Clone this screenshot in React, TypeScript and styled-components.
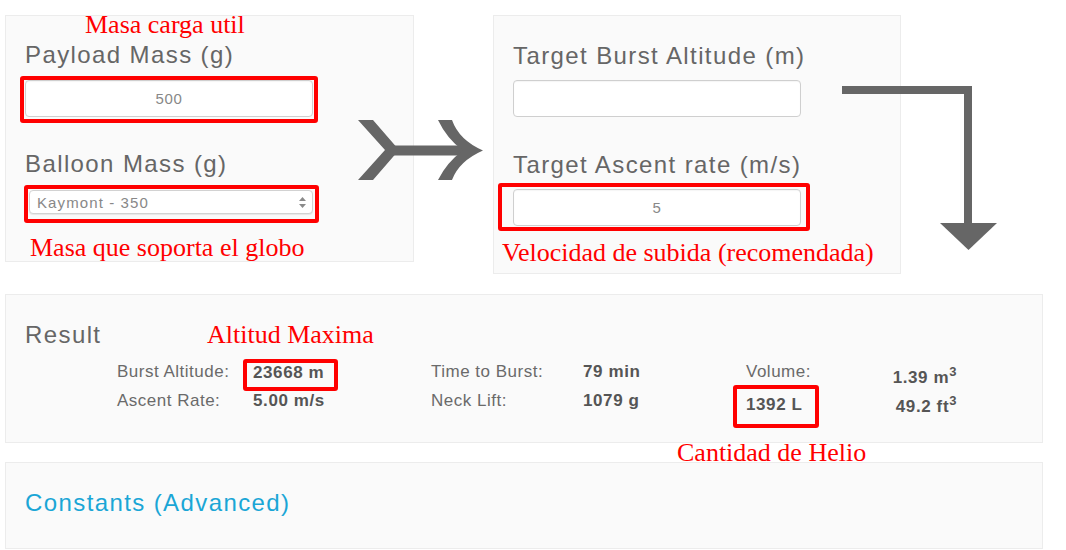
import React from "react";
import styled, { createGlobalStyle } from "styled-components";

const GlobalStyle = createGlobalStyle`
  body {
    margin: 0;
    background: #ffffff;
    font-family: "Liberation Sans", Arial, Helvetica, sans-serif;
  }
`;

export default function App() {
    return (
        <>
            <GlobalStyle />
            <Page>
                <TopRow>
                    <Panel $width={409} $height={247} $pad="0 19px">
                        <Note $ml={60} $mt={-2}>Masa carga util</Note>
                        <FieldLabel $mt={4}>Payload Mass (g)</FieldLabel>
                        <Highlight $mt={6} $ml={-5} $pad="0 1px 2px 1px">
                            <TextInput $width={288} defaultValue="500" readOnly />
                        </Highlight>
                        <FieldLabel $mt={26}>Balloon Mass (g)</FieldLabel>
                        <Highlight $mt={6} $ml={-1} $pad="1px 2px 5px 1px">
                            <SelectBox>
                                <span>Kaymont - 350</span>
                                <svg width="7" height="11" viewBox="0 0 7 11">
                                    <polygon points="0,4 7,4 3.5,0" fill="#8a8a8a" />
                                    <polygon points="0,7 7,7 3.5,11" fill="#8a8a8a" />
                                </svg>
                            </SelectBox>
                        </Highlight>
                        <Note $ml={5} $mt={14}>Masa que soporta el globo</Note>
                    </Panel>

                    <Panel $width={408} $height={259} $pad="25px 19px 0 19px">
                        <FieldLabel>Target Burst Altitude (m)</FieldLabel>
                        <TextInput $width={288} $mt={9} readOnly />
                        <FieldLabel $mt={33}>Target Ascent rate (m/s)</FieldLabel>
                        <Highlight $mt={3} $ml={-15} $pad="2px 5px 1px 11px">
                            <TextInput $width={288} defaultValue="5" readOnly />
                        </Highlight>
                        <Note $ml={-11} $mt={11}>Velocidad de subida (recomendada)</Note>
                    </Panel>

                    {/* flow arrows drawn over the panels */}
                    <Overlay $left={350} $top={100} width="130" height="70" viewBox="0 0 130 70">
                        <polygon points="3,5 18,5 44,35 18,65 3,65 30,35" fill="#666" />
                        <rect x="36" y="30.5" width="80" height="10" fill="#666" />
                        <path d="M83,5 L97,5 Q104,25 128,35.5 Q104,46 97,65 L83,65 Q92,47 108,35.5 Q92,24 83,5 Z" fill="#666" />
                    </Overlay>
                    <Overlay $left={835} $top={70} width="160" height="167" viewBox="0 0 160 167">
                        <rect x="2" y="1" width="130" height="8" fill="#666" />
                        <rect x="124" y="1" width="8" height="139" fill="#666" />
                        <polygon points="100,138 157,138 128.5,165" fill="#666" />
                    </Overlay>
                </TopRow>

                <Panel $width={1038} $height={149} $pad="25px 19px 0 19px" $mt={20}>
                    <ResultHeader>
                        <ResultTitle>Result</ResultTitle>
                        <Note>Altitud Maxima</Note>
                    </ResultHeader>
                    <StatsGrid>
                        <StatLabel>Burst Altitude:</StatLabel>
                        <Highlight $mt={-3} $ml={-10} $pad="0 10px 4px 6px">
                            <StatValue>23668 m</StatValue>
                        </Highlight>
                        <StatLabel>Time to Burst:</StatLabel>
                        <StatValue>79 min</StatValue>
                        <StatLabel>Volume:</StatLabel>
                        <StatValue $align="right">1.39 m<Sup>3</Sup></StatValue>

                        <StatLabel>Ascent Rate:</StatLabel>
                        <StatValue>5.00 m/s</StatValue>
                        <StatLabel>Neck Lift:</StatLabel>
                        <StatValue>1079 g</StatValue>
                        <Highlight $mt={-6} $ml={-13} $pad="6px 12px 9px 9px">
                            <StatValue>1392 L</StatValue>
                        </Highlight>
                        <StatValue $align="right">49.2 ft<Sup>3</Sup></StatValue>
                    </StatsGrid>
                </Panel>

                <HelioRow>
                    <Note $ml={672} $lh={19}>Cantidad de Helio</Note>
                </HelioRow>

                <Panel $width={1038} $height={87} $pad="25px 19px 0 19px">
                    <AdvancedLink href="#constants">Constants (Advanced)</AdvancedLink>
                </Panel>
            </Page>
        </>
    );
}

const Page = styled.div`
  width: 1066px;
  padding: 15px 0 0 5px;
  box-sizing: border-box;
`;

const TopRow = styled.div`
  position: relative;
  display: flex;
  align-items: flex-start;
  gap: 79px;
`;

const Panel = styled.div<{ $width: number; $height: number; $pad: string; $mt?: number }>`
  width: ${(p) => p.$width}px;
  height: ${(p) => p.$height}px;
  margin-top: ${(p) => p.$mt ?? 0}px;
  padding: ${(p) => p.$pad};
  box-sizing: border-box;

  background: #fafafa;
  border: 1px solid #ececec;
`;

const FieldLabel = styled.div<{ $mt?: number }>`
  margin-top: ${(p) => p.$mt ?? 0}px;
  font-size: 24px;
  line-height: 30px;
  letter-spacing: 1.4px;
  color: #666;
  white-space: nowrap;
`;

// red hand-written notes from the annotated screenshot
const Note = styled.div<{ $mt?: number; $ml?: number; $lh?: number }>`
  margin-top: ${(p) => p.$mt ?? 0}px;
  margin-left: ${(p) => p.$ml ?? 0}px;
  font-family: "Liberation Serif", "Times New Roman", serif;
  font-size: 26px;
  line-height: ${(p) => p.$lh ?? 22}px;
  color: #ff0000;
  white-space: nowrap;
`;

const Highlight = styled.div<{ $mt?: number; $ml?: number; $pad: string }>`
  width: fit-content;
  margin-top: ${(p) => p.$mt ?? 0}px;
  margin-left: ${(p) => p.$ml ?? 0}px;
  padding: ${(p) => p.$pad};
  border: 4px solid #ff0000;
  border-radius: 3px;
`;

const TextInput = styled.input<{ $width: number; $mt?: number }>`
  display: block;
  width: ${(p) => p.$width}px;
  height: 37px;
  margin-top: ${(p) => p.$mt ?? 0}px;
  padding: 0;
  box-sizing: border-box;

  background: #fff;
  border: 1px solid #cfcfcf;
  border-radius: 4px;
  box-shadow: inset 0 1px 1px rgba(0, 0, 0, 0.04);
  outline: none;

  font-family: "Liberation Sans", Arial, sans-serif;
  font-size: 15px;
  letter-spacing: 0.6px;
  text-align: center;
  color: #888;
`;

const SelectBox = styled.div`
  display: flex;
  align-items: center;
  justify-content: space-between;
  width: 284px;
  height: 24px;
  padding: 0 6px 0 7px;
  box-sizing: border-box;

  background: #fff;
  border: 1px solid #d2d2d2;
  border-radius: 4px;
  box-shadow: 0 1px 1px rgba(0, 0, 0, 0.08);

  font-size: 15px;
  letter-spacing: 1.1px;
  color: #888;
`;

const Overlay = styled.svg<{ $left: number; $top: number }>`
  position: absolute;
  left: ${(p) => p.$left}px;
  top: ${(p) => p.$top}px;
`;

const ResultHeader = styled.div`
  display: flex;
  align-items: baseline;
`;

const ResultTitle = styled.div`
  flex: none;
  width: 182px;
  font-size: 24px;
  line-height: 30px;
  letter-spacing: 1.4px;
  color: #666;
`;

const StatsGrid = styled.div`
  display: grid;
  grid-template-columns: 136px 178px 152px 163px 139px 72px;
  align-items: start;
  margin: 12px 0 0 92px;
`;

const StatLabel = styled.div`
  font-size: 17px;
  line-height: 20px;
  letter-spacing: 0.5px;
  color: #6a6a6a;
  white-space: nowrap;
`;

const StatValue = styled.div<{ $align?: string }>`
  font-size: 17px;
  font-weight: bold;
  line-height: 20px;
  letter-spacing: 0.6px;
  color: #555;
  white-space: nowrap;
  text-align: ${(p) => p.$align ?? "left"};
`;

const Sup = styled.sup`
  font-size: 13px;
`;

const HelioRow = styled.div`
  height: 19px;
`;

const AdvancedLink = styled.a`
  display: block;
  font-size: 24px;
  line-height: 30px;
  letter-spacing: 1.4px;
  color: #1aa6d6;
  text-decoration: none;
`;
